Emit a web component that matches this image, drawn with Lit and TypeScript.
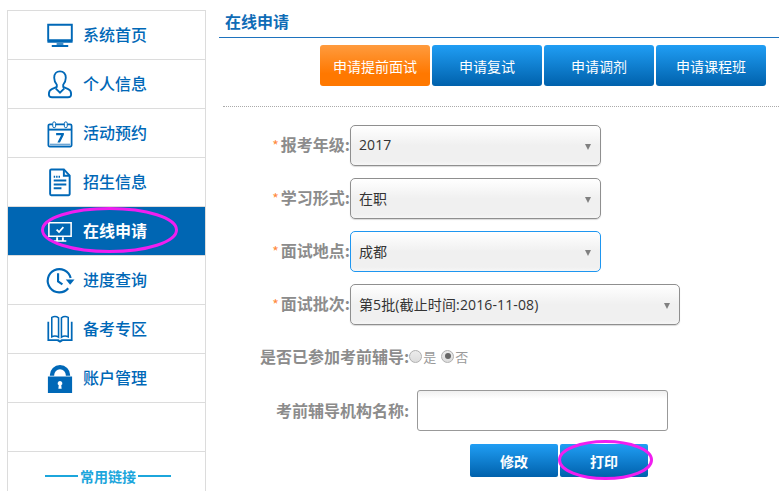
import { LitElement, html, css, svg } from "lit";
import { customElement } from "lit/decorators.js";

const icons: Record<string, unknown> = {
  monitor: svg`<g transform="translate(0 1.500)"><path d="M3.300 3.500h24.400v16H3.300z" fill="none" stroke="currentColor" stroke-width="2"/><path d="M2.500 20h26v2h-26z" fill="currentColor"/><path d="M12 22.500h7v1.500h-7zM7 24.300h17v2H7z" fill="currentColor"/></g>`,
  person: svg`<g fill="none" stroke="currentColor" stroke-width="1.900"><path d="M15.500 2.500c-3.800 0-6 2.800-6 6.500 0 3 1.200 5.500 2.700 7.300v2.200L7 20.800C4.600 21.800 4 23.800 4 26c0 2 1.300 3.200 3.300 3.200h16.400c2 0 3.300-1.200 3.300-3.200 0-2.200-.6-4.200-3-5.200l-5.200-2.300v-2.200c1.500-1.800 2.700-4.300 2.700-7.300 0-3.700-2.200-6.500-6-6.500z"/><path d="M11 20l4.500 4.500L20 20"/></g>`,
  calendar: svg`<path d="M5 6.500h21a1.500 1.500 0 0 1 1.500 1.500v20a1.500 1.500 0 0 1-1.500 1.500H5A1.500 1.500 0 0 1 3.500 28V8A1.500 1.500 0 0 1 5 6.500z" fill="none" stroke="currentColor" stroke-width="1.800"/><path d="M4 11h23v2H4z" fill="currentColor"/><path d="M5 26.500h21v2H5z" fill="#6ea6d4"/><rect x="8" y="4" width="3" height="6" rx="1.500" fill="#fff" stroke="currentColor" stroke-width="1"/><rect x="20" y="4" width="3" height="6" rx="1.500" fill="#fff" stroke="currentColor" stroke-width="1"/><path d="M11.500 15.500h8v1.800l-4 8h-2.700l3.800-7.500h-5.100z" fill="currentColor"/>`,
  doc: svg`<g fill="none" stroke="currentColor" stroke-width="2"><path d="M6.500 2.500h13l6 6.500v19a1.200 1.200 0 0 1-1.200 1.200H6.500A1.200 1.200 0 0 1 5.300 28V3.700a1.200 1.200 0 0 1 1.200-1.200z"/><path d="M19.500 3v6h6"/></g><g fill="currentColor"><path d="M9 9h1.500v2H9zM11.500 9H13v2h-1.500zM14 9h1.500v2H14zM9 13h13v2H9zM9 17h13v2H9zM9 21h8v2H9z"/></g>`,
  check: svg`<path d="M4 7h23v14H4z" fill="none" stroke="currentColor" stroke-width="1.600"/><path d="M12 14l2.500 2.500 4.500-5" fill="none" stroke="currentColor" stroke-width="1.800"/><path d="M11.500 22h2v3h-2zM17.500 22h2v3h-2zM9 25h13v1.500H9z" fill="currentColor"/>`,
  clock: svg`<g fill="none" stroke="currentColor" stroke-width="2.200"><path d="M26.500 13.500A12 12 0 1 0 24 24"/><path d="M13.500 8.500v8.500l4.500 3"/></g><path d="M21.500 15h9L26 20.500z" fill="currentColor"/>`,
  book: svg`<g fill="none" stroke="currentColor" stroke-width="1.600"><path d="M7 3.500c2-1 5-1 7 .5v20c-2-1.500-5-1.500-7-.5zM24 3.500c-2-1-5-1-7 .5v20c2-1.500 5-1.500 7-.5z"/></g><path d="M2.500 8H4.300v18H13c1 0 2 .5 2.500 1.500.5-1 1.500-1.500 2.500-1.500h8.700V8h1.800v20H18.500l-3 1.800-3-1.800h-10z" fill="currentColor"/>`,
  lock: svg`<path d="M5 13.200v-.7a10.500 10.500 0 0 1 21 0v.7h-4.500v-.7a6 6 0 0 0-12 0v.7z" fill="currentColor"/><path fill-rule="evenodd" d="M3 14h25v17H3zM15.500 18.500a2.500 2.500 0 0 0-1.300 4.600L13.800 26.500h3.400l-.4-3.400a2.500 2.500 0 0 0-1.300-4.600z" fill="currentColor"/>`,
};

const menu = [
  ["monitor", "系统首页"],
  ["person", "个人信息"],
  ["calendar", "活动预约"],
  ["doc", "招生信息"],
  ["check", "在线申请"],
  ["clock", "进度查询"],
  ["book", "备考专区"],
  ["lock", "账户管理"],
];

const fields = [
  ["报考年级:", "2017", ""],
  ["学习形式:", "在职", ""],
  ["面试地点:", "成都", "focus"],
  ["面试批次:", "第5批(截止时间:2016-11-08)", "wide"],
];

@customElement("app-root")
export class AppRoot extends LitElement {
  static styles = css`
    :host {
      display: flex;
      width: 779px;
      height: 491px;
      overflow: hidden;
      background: #fff;
      font-family: "Noto Sans CJK SC", "Open Sans", sans-serif;
    }
    .side {
      width: 199px;
      height: 500px;
      flex: none;
      box-sizing: border-box;
      margin: 10px 0 0 7px;
      border: 1px solid #dcdcdc;
      border-bottom: none;
    }
    .item {
      height: 48px;
      border-bottom: 1px solid #dcdcdc;
      display: flex;
      align-items: center;
      gap: 8px;
      padding-left: 37px;
      color: #0068b7;
      font-size: 16px;
      font-weight: 500;
      position: relative;
    }
    .item span {
      padding-bottom: 2px;
    }
    .item.active {
      background: #0066b3;
      color: #fff;
      font-weight: 700;
    }
    .item svg.ic {
      width: 30px;
      height: 30px;
      flex: none;
    }
    .ring {
      position: absolute;
      pointer-events: none;
      overflow: visible;
    }
    .item .ring {
      left: 33px;
      top: 0;
      width: 137px;
      height: 46px;
    }
    .links {
      height: 48px;
      display: flex;
      align-items: center;
      justify-content: center;
      gap: 2px;
      color: #1ca6dc;
      font-size: 14px;
      font-weight: 700;
      padding-left: 3px;
    }
    .links i {
      width: 33px;
      height: 2px;
      background: #1ca6dc;
    }
    .main {
      flex: 1;
      margin-left: 13px;
      min-width: 0;
    }
    .title {
      height: 36px;
      box-sizing: border-box;
      border-bottom: 1px solid #1e73be;
      margin-top: 2px;
      padding: 8px 0 0 6px;
      font-size: 16px;
      font-weight: 700;
      line-height: 22px;
      color: #0f6cb6;
    }
    .tabs {
      display: flex;
      gap: 2px;
      margin: 7px 0 0 101px;
    }
    .tab {
      width: 110px;
      height: 41px;
      border-radius: 3px;
      display: flex;
      align-items: center;
      justify-content: center;
      color: #fff;
      font-size: 14px;
      background: linear-gradient(#209ef4, #0061ac);
    }
    .tab.on {
      background: linear-gradient(#ff9b3e, #ff7800 70%);
    }
    .dots {
      height: 0;
      margin: 20px 0 0 4px;
      border-top: 1px dotted #aaa;
    }
    .form {
      margin-top: 18px;
      display: flex;
      flex-direction: column;
      gap: 12px;
    }
    .row {
      display: flex;
      align-items: center;
      height: 41px;
    }
    .label {
      width: 131px;
      flex: none;
      box-sizing: border-box;
      text-align: right;
      padding-bottom: 4px;
      color: #8c8c8c;
      font-size: 16px;
      font-weight: 700;
      white-space: nowrap;
    }
    .label b {
      color: #ff8a3c;
      font-weight: 400;
      font-size: 14px;
      margin-right: 2px;
    }
    .select {
      width: 251px;
      height: 41px;
      box-sizing: border-box;
      border: 1px solid #8f8f8f;
      border-radius: 5px;
      padding: 0 9px 0 8px;
      display: flex;
      align-items: center;
      justify-content: space-between;
      color: #333;
      font-family: "Open Sans", "Noto Sans CJK SC", sans-serif;
      font-size: 14px;
      letter-spacing: 0.12px;
      background: linear-gradient(#fff, #f0f0f0 50%, #f0f0f0 90%, #f6f6f6);
      box-shadow: 0 1px 1px rgba(0, 0, 0, 0.15);
    }
    .select .val {
      padding-bottom: 2px;
    }
    .select.wide {
      width: 330px;
    }
    .select.focus {
      border-color: #1e96f0;
      box-shadow: none;
    }
    .caret {
      width: 0;
      height: 0;
      border-left: 3.500px solid transparent;
      border-right: 3.500px solid transparent;
      border-top: 6px solid #808080;
      margin-top: 2px;
    }
    .radios {
      display: flex;
      align-items: center;
      height: 20px;
      margin: 21px 0 0 41px;
      color: #8c8c8c;
      font-size: 16px;
      font-weight: 700;
      white-space: nowrap;
    }
    .opt {
      display: flex;
      align-items: center;
      font-size: 13px;
      font-weight: 400;
      color: #999;
      margin-right: 5px;
    }
    .radio {
      width: 13px;
      height: 13px;
      box-sizing: border-box;
      border-radius: 50%;
      border: 1px solid #b0b0b0;
      background: linear-gradient(#ececec, #dcdcdc);
      display: flex;
      align-items: center;
      justify-content: center;
      margin-right: 1px;
    }
    .radio.on::after {
      content: "";
      width: 6px;
      height: 6px;
      border-radius: 50%;
      background: #666;
    }
    .name {
      display: flex;
      align-items: center;
      margin: 24px 0 0 57px;
      height: 41px;
    }
    .name .label {
      width: auto;
      padding-bottom: 2px;
      font-size: 16px;
    }
    .input {
      width: 251px;
      height: 41px;
      box-sizing: border-box;
      margin-left: 8px;
      border: 1px solid #999;
      border-radius: 3px;
      background: linear-gradient(#f0f0f0, #fff 8px);
    }
    .actions {
      display: flex;
      gap: 2px;
      margin: 13px 0 0 251px;
    }
    .btn {
      width: 88px;
      height: 33px;
      border-radius: 2px;
      display: flex;
      align-items: center;
      justify-content: center;
      color: #fff;
      font-size: 14px;
      font-weight: 700;
      background: linear-gradient(#209ef4, #0061ac);
      position: relative;
    }
    .btn .ring {
      left: -2px;
      top: -4px;
      width: 95px;
      height: 40px;
    }
  `;

  private ring(w: number, h: number) {
    return html`<svg class="ring" viewBox="0 0 ${w} ${h}">
      <ellipse cx=${w / 2} cy=${h / 2} rx=${w / 2 - 1.5} ry=${h / 2 - 1.5} fill="none" stroke="#f01ef0" stroke-width="3"></ellipse>
    </svg>`;
  }

  render() {
    return html`
      <nav class="side">
        ${menu.map(
          ([ic, label], i) => html`<div class="item ${i === 4 ? "active" : ""}">
            <svg class="ic" viewBox="0 0 31 31">${icons[ic]}</svg>
            <span>${label}</span>
            ${i === 4 ? this.ring(137, 46) : ""}
          </div>`
        )}
        <div class="item"></div>
        <div class="links"><i></i><span>常用链接</span><i></i></div>
      </nav>
      <main class="main">
        <div class="title">在线申请</div>
        <div class="tabs">
          <div class="tab on">申请提前面试</div>
          <div class="tab">申请复试</div>
          <div class="tab">申请调剂</div>
          <div class="tab">申请课程班</div>
        </div>
        <div class="dots"></div>
        <div class="form">
          ${fields.map(
            ([label, value, mod]) => html`<div class="row">
              <div class="label"><b>*</b>${label}</div>
              <div class="select ${mod}"><span class="val">${value}</span><span class="caret"></span></div>
            </div>`
          )}
        </div>
        <div class="radios">
          <span>是否已参加考前辅导:</span>
          <span class="opt"><span class="radio"></span>是</span>
          <span class="opt"><span class="radio on"></span>否</span>
        </div>
        <div class="name">
          <div class="label">考前辅导机构名称:</div>
          <div class="input"></div>
        </div>
        <div class="actions">
          <div class="btn">修改</div>
          <div class="btn">打印${this.ring(95, 40)}</div>
        </div>
      </main>
    `;
  }
}
